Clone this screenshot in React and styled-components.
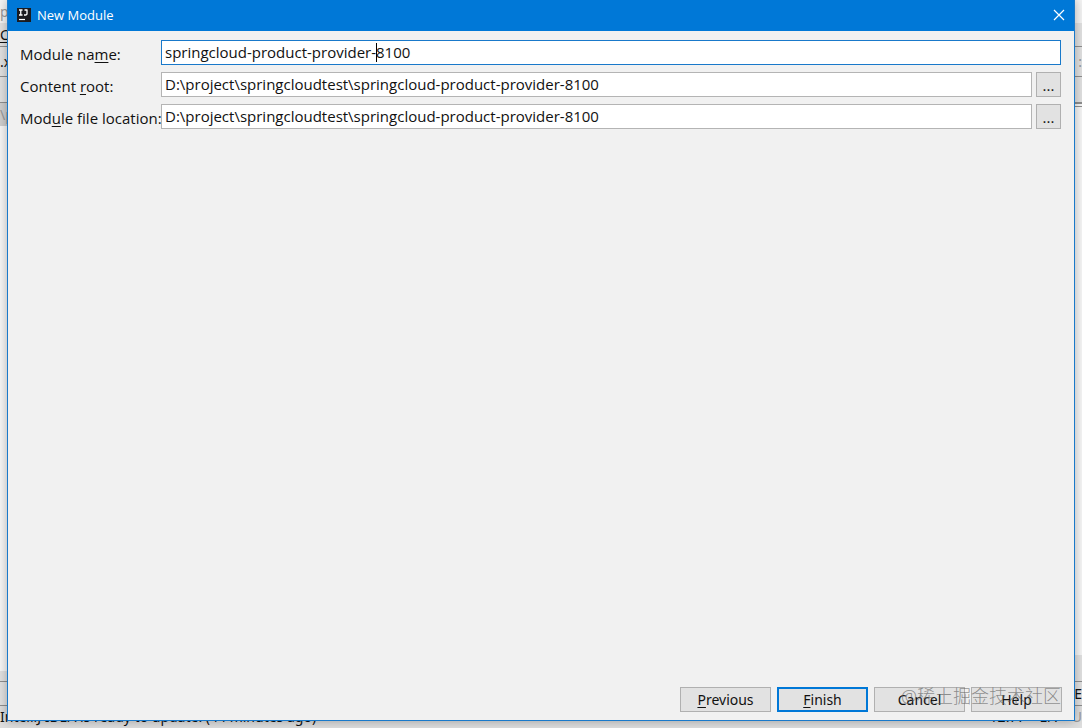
import React, { useState } from "react";
import styled, { createGlobalStyle } from "styled-components";

const App = () => {
  const [moduleName, setModuleName] = useState(
    "springcloud-product-provider-8100"
  );
  const [contentRoot, setContentRoot] = useState(
    "D:\\project\\springcloudtest\\springcloud-product-provider-8100"
  );
  const [fileLocation, setFileLocation] = useState(
    "D:\\project\\springcloudtest\\springcloud-product-provider-8100"
  );

  return (
    <Desktop>
      <GlobalStyle />
      <IdeWindow>
        <IdeBand $height={23} $muted $bg="#f4f4f4">
          <span>p</span>
        </IdeBand>
        <IdeBand $height={24} $line>
          <span>
            <u>C</u>
          </span>
        </IdeBand>
        <IdeBand $height={30} $line>
          <span>.x</span>
          <Muted>:</Muted>
        </IdeBand>
        <IdeBand $height={26} $line />
        <IdeBand $height={23} $muted $bg="#cfcfcf">
          <span>\p</span>
          <TabEdge />
        </IdeBand>
        <IdeEditor>
          <ToolCorner />
        </IdeEditor>
        <IdeBand $height={11} $line />
        <IdeBand $height={24} $line>
          <span />
          <span>E</span>
        </IdeBand>
        <StatusBar>
          <span>IntelliJ IDEA is ready to update. (44 minutes ago)</span>
          <StatusRight>
            <span>12:77</span>
            <span>LF:</span>
            <Muted>U</Muted>
          </StatusRight>
        </StatusBar>
      </IdeWindow>

      <Dialog>
        <TitleBar>
          <IdeaLogo />
          <Title>New Module</Title>
          <CloseButton aria-label="Close">
            <svg width="12" height="12" viewBox="0 0 12 12">
              <path d="M1 1L11 11M11 1L1 11" stroke="#fff" strokeWidth="1.2" />
            </svg>
          </CloseButton>
        </TitleBar>

        <Form id="moduleForm" onSubmit={(e) => e.preventDefault()}>
          <FormRow>
            <label htmlFor="moduleName">
              Module na<u>m</u>e:
            </label>
            <FieldWrap>
              <TextField
                id="moduleName"
                $active
                value={moduleName}
                onChange={(e) => setModuleName(e.target.value)}
              />
              <Caret>
                <span>springcloud-product-provider-</span>
              </Caret>
            </FieldWrap>
          </FormRow>
          <FormRow>
            <label htmlFor="contentRoot">
              Content <u>r</u>oot:
            </label>
            <TextField
              id="contentRoot"
              value={contentRoot}
              onChange={(e) => setContentRoot(e.target.value)}
            />
            <BrowseButton type="button">...</BrowseButton>
          </FormRow>
          <FormRow>
            <label htmlFor="fileLocation">
              Mod<u>u</u>le file location:
            </label>
            <TextField
              id="fileLocation"
              value={fileLocation}
              onChange={(e) => setFileLocation(e.target.value)}
            />
            <BrowseButton type="button">...</BrowseButton>
          </FormRow>
        </Form>

        <Footer>
          <DialogButton type="button">
            <u>P</u>revious
          </DialogButton>
          <DialogButton type="submit" form="moduleForm" $primary>
            <u>F</u>inish
          </DialogButton>
          <DialogButton type="button">Cancel</DialogButton>
          <DialogButton type="button">Help</DialogButton>
          <Watermark>@稀土掘金技术社区</Watermark>
        </Footer>
      </Dialog>
    </Desktop>
  );
};

export default App;

const IdeaLogo = () => (
  <svg width="14" height="14" viewBox="0 0 14 14">
    <rect width="14" height="14" fill="#1b1b1f" />
    <path
      d="M2 2H5.5M3.75 2V7M2 7H5.5M7.5 2H10.5M10 2V5.5Q10 7 8.5 7H7"
      fill="none"
      stroke="#fff"
      strokeWidth="1.3"
    />
    <path d="M2 11.5H8" stroke="#fff" strokeWidth="1.2" />
  </svg>
);

const GlobalStyle = createGlobalStyle`
  * {
    box-sizing: border-box;
  }

  body {
    margin: 0;
    overflow: hidden;
    color: #111;
    font-family: "Noto Sans", "Noto Sans CJK SC", sans-serif;
    font-size: 14px;
  }

  button,
  input {
    font: inherit;
    color: inherit;
  }

  u {
    text-underline-offset: 2px;
  }
`;

const Desktop = styled.div`
  position: relative;
  display: flex;
  min-height: 100vh;
  padding: 0 7px 7px;
`;

/* the main IDE window that stays behind the dialog */
const IdeWindow = styled.div`
  position: absolute;
  inset: 0;
  display: flex;
  flex-direction: column;
  overflow: hidden;
  background: #dedede;
`;

const IdeBand = styled.div`
  display: flex;
  flex: none;
  align-items: center;
  justify-content: space-between;
  height: ${(props) => props.$height}px;
  background: ${(props) => props.$bg || "#e2e2e2"};
  border-bottom: ${(props) => (props.$line ? "1px solid #8f8f8f" : "none")};
  color: ${(props) => (props.$muted ? "#999" : "#111")};
`;

const Muted = styled.span`
  color: #999;
`;

const TabEdge = styled.div`
  align-self: stretch;
  width: 50%;
  background: #f7f7f7;
  border-top: 4px double #8f8f8f;
`;

const IdeEditor = styled.div`
  display: flex;
  flex: 1;
  align-items: flex-end;
  justify-content: flex-end;
  background: #f7f7f7;
`;

const ToolCorner = styled.div`
  width: 50%;
  height: 16px;
  background: #e2e2e2;
`;

const StatusBar = styled.div`
  display: flex;
  flex: none;
  justify-content: space-between;
  height: 22px;
  line-height: 22px;
`;

const StatusRight = styled.div`
  display: flex;
  gap: 14px;
`;

const Dialog = styled.main`
  position: relative;
  display: flex;
  flex: 1;
  flex-direction: column;
  background: #f1f1f1;
  border: 1px solid #1979ca;
  border-top: none;
  box-shadow: 0 0 10px rgba(0, 0, 0, 0.3);
`;

const TitleBar = styled.header`
  display: flex;
  align-items: center;
  gap: 6px;
  height: 31px;
  padding: 0 0 2px 9px;
  background: #0078d7;
  color: #fff;
`;

const Title = styled.h1`
  flex: 1;
  margin: 0;
  font-family: "Open Sans", sans-serif;
  font-size: 13px;
  font-weight: 400;
`;

const CloseButton = styled.button`
  display: flex;
  align-items: center;
  justify-content: center;
  width: 30px;
  height: 29px;
  padding: 0;
  background: none;
  border: none;
`;

const Form = styled.form`
  display: flex;
  flex: 1;
  flex-direction: column;
  gap: 7px;
  padding: 9px 13px 9px 12px;
  font-family: "Open Sans", sans-serif;
  font-size: 15px;
`;

const FormRow = styled.div`
  display: flex;

  label {
    flex: none;
    width: 141px;
    line-height: 29px;
    height: 25px;
    white-space: nowrap;
  }
`;

const FieldWrap = styled.div`
  position: relative;
  display: flex;
  flex: 1;
`;

const TextField = styled.input`
  flex: 1;
  min-width: 0;
  height: 25px;
  padding: 0 3px 2px;
  background: #fff;
  border: 1px solid ${(props) => (props.$active ? "#1979ca" : "#b4b4b4")};
  border-radius: 0;
  outline: none;
`;

/* drawn caret, sits behind the last typed dash */
const Caret = styled.div`
  position: absolute;
  top: 3px;
  left: 4px;
  height: 19px;
  border-right: 1px solid #000;
  pointer-events: none;

  span {
    visibility: hidden;
  }
`;

const BrowseButton = styled.button`
  width: 25px;
  height: 25px;
  margin-left: 4px;
  padding: 0;
  background: #e2e2e2;
  border: 1px solid #b0b0b0;
`;

const Footer = styled.footer`
  position: relative;
  display: flex;
  justify-content: flex-end;
  gap: 6px;
  padding: 0 12px 8px;
`;

const DialogButton = styled.button`
  width: 91px;
  height: 25px;
  padding: 0;
  background: #e2e2e2;
  border: ${(props) =>
    props.$primary ? "2px solid #0078d7" : "1px solid #b0b0b0"};
`;

const Watermark = styled.span`
  position: absolute;
  right: 13px;
  bottom: 12px;
  color: rgba(90, 90, 90, 0.65);
  font-size: 18px;
  font-weight: 300;
  line-height: 24px;
  pointer-events: none;
`;
